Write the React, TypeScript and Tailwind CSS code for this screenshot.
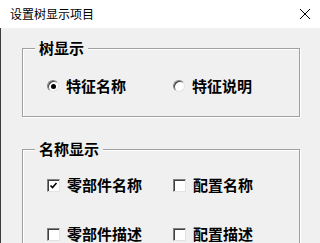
import type { ReactNode } from "react";

const cjk = { fontFamily: '"Noto Sans CJK SC", "Noto Sans", sans-serif' };

const Radio = ({ checked }: { checked?: boolean }) => (
  <span className="relative flex h-[12px] w-[12px] shrink-0 items-center justify-center rounded-full border border-t-[#808080] border-l-[#808080] border-b-[#e3e3e3] border-r-[#e3e3e3] bg-white shadow-[inset_1px_1px_0_#404040]">
    {checked && <span className="h-[5px] w-[5px] rounded-full bg-black" />}
  </span>
);

const Checkbox = ({ checked }: { checked?: boolean }) => (
  <span className="flex h-[13px] w-[13px] shrink-0 items-center justify-center border border-t-[#808080] border-l-[#808080] border-b-[#e3e3e3] border-r-[#e3e3e3] bg-white shadow-[inset_1px_1px_0_#404040]">
    {checked && (
      <svg width="9" height="9" viewBox="0 0 9 9">
        <path d="M1.5 4.5 L3.5 6.5 L7.5 2" fill="none" stroke="#000" strokeWidth="1.6" />
      </svg>
    )}
  </span>
);

const Item = ({ control, label }: { control: ReactNode; label: string }) => (
  <div className="flex w-[138px] items-center gap-[7px]">
    {control}
    <span className="text-[15px] font-bold leading-[20px] text-black" style={cjk}>
      {label}
    </span>
  </div>
);

const Group = ({ title, children, className }: { title: string; children: ReactNode; className?: string }) => (
  <div className={`relative mx-[21px] w-[278px] border border-[#a0a0a0] shadow-[1px_1px_0_#fff,inset_1px_1px_0_#fff] ${className ?? ""}`}>
    <span
      className="absolute -top-[11px] left-[12px] bg-[#f0f0f0] px-1 text-[15px] font-bold leading-[20px] text-black"
      style={cjk}
    >
      {title}
    </span>
    {children}
  </div>
);

export default function App() {
  return (
    <div className="h-[243px] w-[320px] overflow-hidden bg-[#f0f0f0]" style={cjk}>
      <div className="flex h-[28px] items-center justify-between bg-white pl-[10px] pr-[9px]">
        <span className="text-[12px] leading-none text-black" style={cjk}>
          设置树显示项目
        </span>
        <svg width="12" height="12" viewBox="0 0 12 12">
          <path d="M1 1 L11 11 M11 1 L1 11" stroke="#000" strokeWidth="1" />
        </svg>
      </div>
      <div className="h-[215px] border-l border-[#3c3c3c] pt-[20px]">
        <Group title="树显示" className="pt-[27px] pb-[20px]">
          <div className="flex pl-[24px]">
            <Item control={<Radio checked />} label="特征名称" />
            <Item control={<Radio />} label="特征说明" />
          </div>
        </Group>
        <Group title="名称显示" className="mt-[32px] h-[120px] pt-[25px]">
          <div className="flex flex-col gap-[29px] pl-[24px]">
            <div className="flex">
              <Item control={<Checkbox checked />} label="零部件名称" />
              <Item control={<Checkbox />} label="配置名称" />
            </div>
            <div className="flex">
              <Item control={<Checkbox />} label="零部件描述" />
              <Item control={<Checkbox />} label="配置描述" />
            </div>
          </div>
        </Group>
      </div>
    </div>
  );
}
